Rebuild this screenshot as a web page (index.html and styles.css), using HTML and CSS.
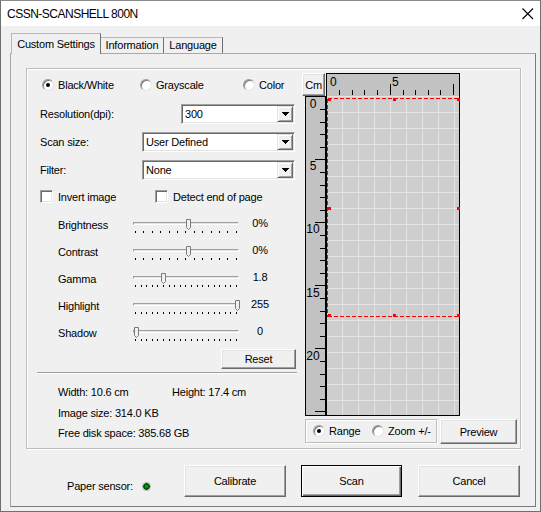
FILE: index.html
```html
<!DOCTYPE html>
<html>
<head>
<meta charset="utf-8">
<title>CSSN-SCANSHELL 800N</title>
<link rel="stylesheet" href="styles.css">
</head>
<body>
<div class="window">
  <div class="titlebar">
    <span class="title">CSSN-SCANSHELL 800N</span>
    <svg class="close" width="12" height="12" viewBox="0 0 12 12"><path d="M0.5 0.5L11 11M11 0.5L0.5 11" stroke="#000" stroke-width="1.1" fill="none"/></svg>
  </div>
  <div class="client">
    <div class="tabs">
      <div class="tab active">Custom Settings</div>
      <div class="tab tab-info">Information</div>
      <div class="tab tab-lang">Language</div>
    </div>
    <div class="page">
      <div class="group">
        <div class="left">
          <div class="modes">
            <span class="opt opt-bw"><span class="radio on"></span>Black/White</span>
            <span class="opt opt-gray"><span class="radio"></span>Grayscale</span>
            <span class="opt"><span class="radio"></span>Color</span>
          </div>
          <div class="field field-first">
            <span>Resolution(dpi):</span>
            <div class="combo combo-short"><span class="cval">300</span><span class="cbtn"><svg width="7" height="4" viewBox="0 0 7 4"><path d="M0 0H7L3.5 4Z" fill="#000"/></svg></span></div>
          </div>
          <div class="field">
            <span>Scan size:</span>
            <div class="combo combo-long"><span class="cval">User Defined</span><span class="cbtn"><svg width="7" height="4" viewBox="0 0 7 4"><path d="M0 0H7L3.5 4Z" fill="#000"/></svg></span></div>
          </div>
          <div class="field">
            <span>Filter:</span>
            <div class="combo combo-long"><span class="cval">None</span><span class="cbtn"><svg width="7" height="4" viewBox="0 0 7 4"><path d="M0 0H7L3.5 4Z" fill="#000"/></svg></span></div>
          </div>
          <div class="checks">
            <span class="copt copt-first"><span class="check"></span>Invert image</span>
            <span class="copt"><span class="check"></span>Detect end of page</span>
          </div>
          <div class="sliders">
            <div class="srow">
              <span class="sname">Brightness</span>
              <div class="slider">
                <div class="track"></div>
                <div class="ticks"><i></i><i></i><i></i><i></i><i></i><i></i><i></i><i></i><i></i><i></i><i></i><i></i><i></i></div>
                <svg class="thumb" style="left:53px" width="5" height="11" viewBox="0 0 5 11"><path d="M0.5 8.5V0.5H4.5V8.5L2.5 10.5Z" fill="#f0f0f0" stroke="#7a7a7a"/></svg>
              </div>
              <span class="sval">0%</span>
            </div>
            <div class="srow">
              <span class="sname">Contrast</span>
              <div class="slider">
                <div class="track"></div>
                <div class="ticks"><i></i><i></i><i></i><i></i><i></i><i></i><i></i><i></i><i></i><i></i><i></i><i></i><i></i></div>
                <svg class="thumb" style="left:53px" width="5" height="11" viewBox="0 0 5 11"><path d="M0.5 8.5V0.5H4.5V8.5L2.5 10.5Z" fill="#f0f0f0" stroke="#7a7a7a"/></svg>
              </div>
              <span class="sval">0%</span>
            </div>
            <div class="srow">
              <span class="sname">Gamma</span>
              <div class="slider">
                <div class="track"></div>
                <div class="ticks"><i></i><i></i><i></i><i></i><i></i><i></i><i></i><i></i><i></i><i></i><i></i><i></i><i></i><i></i><i></i><i></i><i></i><i></i><i></i></div>
                <svg class="thumb" style="left:28px" width="5" height="11" viewBox="0 0 5 11"><path d="M0.5 8.5V0.5H4.5V8.5L2.5 10.5Z" fill="#f0f0f0" stroke="#7a7a7a"/></svg>
              </div>
              <span class="sval">1.8</span>
            </div>
            <div class="srow">
              <span class="sname">Highlight</span>
              <div class="slider">
                <div class="track"></div>
                <div class="ticks"><i></i><i></i><i></i><i></i><i></i><i></i><i></i><i></i><i></i><i></i><i></i><i></i><i></i><i></i><i></i><i></i><i></i><i></i><i></i></div>
                <svg class="thumb" style="left:102px" width="5" height="11" viewBox="0 0 5 11"><path d="M0.5 8.5V0.5H4.5V8.5L2.5 10.5Z" fill="#f0f0f0" stroke="#7a7a7a"/></svg>
              </div>
              <span class="sval">255</span>
            </div>
            <div class="srow">
              <span class="sname">Shadow</span>
              <div class="slider">
                <div class="track"></div>
                <div class="ticks"><i></i><i></i><i></i><i></i><i></i><i></i><i></i><i></i><i></i><i></i><i></i><i></i><i></i><i></i><i></i><i></i><i></i><i></i><i></i></div>
                <svg class="thumb" style="left:1px" width="5" height="11" viewBox="0 0 5 11"><path d="M0.5 8.5V0.5H4.5V8.5L2.5 10.5Z" fill="#f0f0f0" stroke="#7a7a7a"/></svg>
              </div>
              <span class="sval">0</span>
            </div>
          </div>
          <div class="reset-row"><button class="btn reset">Reset</button></div>
          <div class="sep"></div>
          <div class="info">
            <div><span class="iw">Width: 10.6 cm</span>Height: 17.4 cm</div>
            <div>Image size: 314.0 KB</div>
            <div>Free disk space: 385.68 GB</div>
          </div>
        </div>
        <div class="right">
          <div class="rtop">
            <button class="btn cm">Cm</button>
            <svg class="ruler hruler" width="134" height="23" viewBox="0 0 134 23">
              <rect width="134" height="23" fill="#c2c2c2"/>
              <path d="M0 0.5H134M0.5 0V23M133.5 0V23" stroke="#000" fill="none"/>
              <path d="M13.5 17V22M26.5 17V22M38.5 17V22M51.5 17V22M64.5 11V22M77.5 17V22M89.5 17V22M102.5 17V22M114.5 17V22M127.5 11V22" stroke="#000" fill="none"/>
              <text x="4" y="13">0</text>
              <text x="66" y="13">5</text>
            </svg>
          </div>
          <div class="rmid">
            <svg class="ruler vruler" width="21" height="320" viewBox="0 0 21 320">
              <rect width="21" height="320" fill="#c2c2c2"/>
              <path d="M0.5 0V320M0 319.5H21M20.5 0V320M0 0.5H21" stroke="#000" fill="none"/>
              <path d="M15 13.5H20M15 26.5H20M15 38.5H20M15 51.5H20M10 63.5H20M15 76.5H20M15 89.5H20M15 101.5H20M15 114.5H20M10 126.5H20M15 139.5H20M15 152.5H20M15 164.5H20M15 177.5H20M10 189.5H20M15 202.5H20M15 215.5H20M15 227.5H20M15 240.5H20M10 252.5H20M15 265.5H20M15 278.5H20M15 290.5H20M15 303.5H20M10 315.5H20" stroke="#000" fill="none"/>
              <text x="8" y="12" text-anchor="middle">0</text>
              <text x="8" y="74" text-anchor="middle">5</text>
              <text x="8" y="137" text-anchor="middle">10</text>
              <text x="8" y="201" text-anchor="middle">15</text>
              <text x="8" y="264" text-anchor="middle">20</text>
            </svg>
            <svg class="preview" width="134" height="320" viewBox="0 0 134 320">
              <rect width="134" height="320" fill="#cecece"/>
              <path d="M16.5 0V320M32.5 0V320M48.5 0V320M64.5 0V320M80.5 0V320M96.5 0V320M112.5 0V320M128.5 0V320M0 0.5H134M0 16.5H134M0 32.5H134M0 48.5H134M0 64.5H134M0 80.5H134M0 96.5H134M0 112.5H134M0 128.5H134M0 144.5H134M0 160.5H134M0 176.5H134M0 192.5H134M0 208.5H134M0 224.5H134M0 240.5H134M0 256.5H134M0 272.5H134M0 288.5H134M0 304.5H134" stroke="#e4e4e4" fill="none"/>
              <path d="M1.5 2.5H133M1.5 2.5V220.5M1.5 220.5H133" stroke="#ff0000" stroke-dasharray="4 2" fill="none"/>
              <path d="M0.5 0V320M133.5 0V320M0 319.5H134" stroke="#000" fill="none"/>
              <g fill="#ff0000">
                <rect x="2" y="2" width="3" height="3"/>
                <rect x="67" y="2" width="3" height="3"/>
                <rect x="131" y="2" width="3" height="3"/>
                <rect x="2" y="111" width="3" height="3"/>
                <rect x="131" y="111" width="3" height="3"/>
                <rect x="2" y="218" width="3" height="3"/>
                <rect x="67" y="218" width="3" height="3"/>
                <rect x="131" y="218" width="3" height="3"/>
              </g>
            </svg>
          </div>
          <div class="rbot">
            <div class="rangebox">
              <span class="opt opt-range"><span class="radio on"></span>Range</span>
              <span class="opt"><span class="radio"></span>Zoom +/-</span>
            </div>
            <button class="btn preview-btn">Preview</button>
          </div>
        </div>
      </div>
      <div class="bottom">
        <div class="sensor"><span class="sensor-label">Paper sensor:</span><span class="led"></span></div>
        <button class="btn big">Calibrate</button>
        <button class="btn big default scan">Scan</button>
        <button class="btn big cancel">Cancel</button>
      </div>
    </div>
  </div>
</div>
</body>
</html>
```
FILE: styles.css
```css
* { box-sizing: border-box; }
html, body { margin: 0; padding: 0; }
body {
  background: #f0f0f0;
  font-family: "Liberation Sans", Arial, sans-serif;
  font-size: 11px;
  letter-spacing: -0.2px;
  color: #000;
}
.window {
  width: 541px;
  height: 512px;
  border: 1px solid #6f6f6f;
  border-top-color: #8a8a8a;
  background: #f0f0f0;
  overflow: hidden;
}
.titlebar {
  height: 25px;
  background: #fff;
  display: flex;
  align-items: center;
  justify-content: space-between;
  padding: 0 6px 0 6px;
}
.title { font-size: 12px; letter-spacing: -0.5px; }
.close { display: block; }
.client { padding-top: 7px; }
.tabs {
  display: flex;
  align-items: flex-end;
  height: 20px;
  margin-left: 10px;
}
.tab {
  height: 16px;
  line-height: 15px;
  text-align: center;
  border: 1px solid;
  border-bottom: none;
  border-color: #b8b8b8 #707070 transparent #b8b8b8;
  border-left: none;
  background: #f0f0f0;
}
.tab.active {
  width: 90px;
  height: 21px;
  line-height: 20px;
  margin-bottom: -1px;
  position: relative;
  z-index: 1;
  border-left: 1px solid #b8b8b8;
}
.tab-info { width: 63px; }
.tab-lang { width: 59px; }
.page {
  margin-left: 9px;
  width: 526px;
  height: 454px;
  border: 1px solid;
  border-color: #a8a8a8 #7a7a7a #7a7a7a #a8a8a8;
}
.group {
  margin: 14px 0 0 15px;
  width: 495px;
  height: 381px;
  border: 1px solid #bdbdbd;
  box-shadow: inset 1px 1px 0 #fff, 1px 1px 0 #fff;
  display: flex;
}
.left { width: 275px; }
.right { width: 218px; }

/* radios */
.opt { display: inline-flex; align-items: center; }
.radio {
  width: 12px;
  height: 12px;
  border-radius: 50%;
  background: #fff;
  border: 1px solid;
  border-color: #9a9a9a #e3e3e3 #e3e3e3 #9a9a9a;
  box-shadow: inset 1px 1px 0 #7a7a7a;
  margin-right: 4px;
  display: flex;
  align-items: center;
  justify-content: center;
  flex: none;
}
.radio.on::after {
  content: "";
  width: 4px;
  height: 4px;
  border-radius: 50%;
  background: #000;
}
.modes {
  display: flex;
  align-items: center;
  height: 18px;
  margin-top: 7px;
  padding-left: 15px;
}
.opt-bw { width: 98px; }
.opt-gray { width: 103px; }

/* combo fields */
.field {
  display: flex;
  align-items: center;
  height: 20px;
  margin-top: 8px;
  padding-left: 13px;
}
.field-first { margin-top: 10px; }
.combo {
  margin-left: auto;
  margin-right: 7px;
  height: 20px;
  display: flex;
  background: #fff;
  border: 1px solid;
  border-color: #a0a0a0 #fff #fff #a0a0a0;
  box-shadow: inset 1px 1px 0 #696969, inset -1px -1px 0 #e3e3e3;
  padding: 1px;
}
.combo-short { width: 114px; }
.combo-long { width: 153px; }
.cval { flex: 1; padding-left: 2px; line-height: 16px; }
.cbtn {
  width: 16px;
  height: 16px;
  background: #f0f0f0;
  border: 1px solid;
  border-color: #e3e3e3 #696969 #696969 #e3e3e3;
  box-shadow: inset 1px 1px 0 #fff, inset -1px -1px 0 #a0a0a0;
  display: flex;
  align-items: center;
  justify-content: center;
}
.cbtn svg { display: block; shape-rendering: crispEdges; }

/* checkboxes */
.checks {
  display: flex;
  align-items: center;
  height: 13px;
  margin-top: 10px;
  padding-left: 13px;
}
.copt { display: inline-flex; align-items: center; }
.copt-first { width: 115px; }
.check {
  width: 13px;
  height: 13px;
  background: #fff;
  border: 1px solid;
  border-color: #a0a0a0 #fff #fff #a0a0a0;
  box-shadow: inset 1px 1px 0 #696969, inset -1px -1px 0 #e3e3e3;
  margin-right: 5px;
  flex: none;
}

/* sliders */
.sliders { margin-top: 9px; }
.srow {
  display: flex;
  height: 27px;
  padding-left: 31px;
}
.sname { width: 75px; line-height: 27px; }
.slider {
  position: relative;
  width: 106px;
  height: 27px;
  padding-top: 10px;
}
.track {
  height: 3px;
  background: #e3e3e3;
  border-top: 1px solid #a0a0a0;
  border-left: 1px solid #a0a0a0;
  border-bottom: 1px solid #fff;
  border-right: 1px solid #fff;
}
.ticks {
  display: flex;
  justify-content: space-between;
  margin-top: 6px;
  padding: 0 2px;
  height: 3px;
}
.ticks i {
  display: block;
  width: 1px;
  height: 2px;
  background: #000;
}
.thumb { position: absolute; top: 7px; display: block; }
.sval {
  margin-left: 9px;
  width: 24px;
  text-align: center;
  line-height: 22px;
}

/* buttons */
.btn {
  font: inherit;
  letter-spacing: inherit;
  color: #000;
  padding: 0;
  margin: 0;
  background: #f0f0f0;
  border: 1px solid;
  border-color: #fff #696969 #696969 #fff;
  box-shadow: inset -1px -1px 0 #a0a0a0, inset 1px 1px 0 #e3e3e3;
  display: flex;
  align-items: center;
  justify-content: center;
}
.btn.default {
  border: 1px solid #000;
  box-shadow: inset 1px 1px 0 #fff, inset -1px -1px 0 #696969, inset -2px -2px 0 #a0a0a0;
}
.reset-row { margin-top: 2px; }
.reset { margin-left: 194px; width: 75px; height: 20px; }
.sep {
  margin: 3px 0 0 10px;
  width: 260px;
  height: 2px;
  border-top: 1px solid #a0a0a0;
  border-bottom: 1px solid #fff;
}
.info {
  margin-top: 8px;
  padding-left: 31px;
  line-height: 20.5px;
}
.iw { display: inline-block; width: 114px; }

/* right column */
.rtop { display: flex; margin-top: 4px; height: 23px; }
.cm { width: 23px; height: 23px; }
.ruler text {
  font-family: "Liberation Sans", Arial, sans-serif;
  font-size: 12px;
  letter-spacing: 0;
  fill: #000;
}
.ruler, .preview { display: block; shape-rendering: crispEdges; }
.ruler text { shape-rendering: auto; }
.hruler { margin-left: 1px; }
.rmid { display: flex; padding-left: 3px; }
.rbot {
  display: flex;
  align-items: flex-start;
  margin-top: 3px;
  padding-left: 3px;
}
.rangebox {
  width: 132px;
  height: 24px;
  border: 1px solid #bdbdbd;
  box-shadow: inset 1px 1px 0 #fff, 1px 1px 0 #fff;
  display: flex;
  align-items: center;
  padding-left: 7px;
}
.opt-range { width: 59px; }
.preview-btn { margin-left: 3px; width: 77px; height: 25px; }

/* bottom */
.bottom {
  display: flex;
  margin-top: 16px;
  padding-left: 56px;
}
.sensor {
  display: flex;
  align-items: center;
  width: 117px;
  height: 32px;
  padding-top: 10px;
}
.sensor-label { width: 75px; }
.led {
  width: 9px;
  height: 9px;
  border-radius: 50%;
  background: radial-gradient(circle, #1a8a1a 0 1.5px, #005a00 2px 3px, #b8b8b8 3.5px 4.5px);
}
.big { width: 102px; height: 32px; }
.scan { margin-left: 15px; width: 101px; }
.cancel { margin-left: 16px; }
```
